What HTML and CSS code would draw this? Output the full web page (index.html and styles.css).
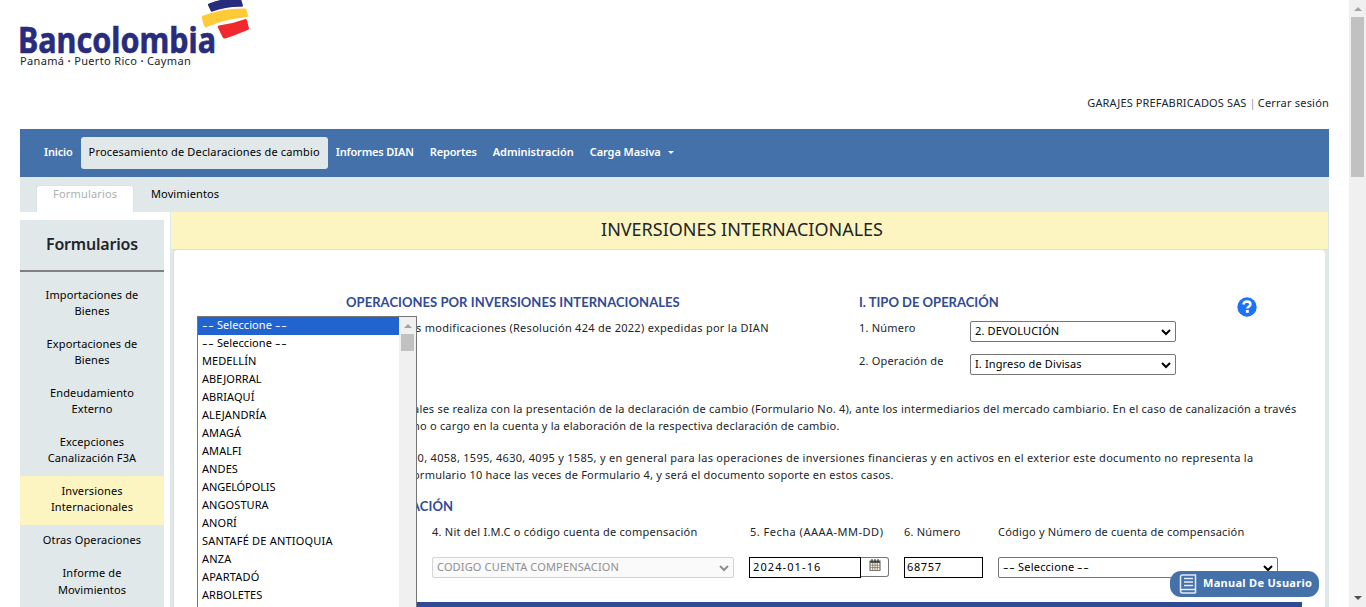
FILE: index.html
```html
<!DOCTYPE html>
<html lang="es">
<head>
<meta charset="utf-8">
<title>Inversiones Internacionales</title>
<link rel="stylesheet" href="styles.css">
</head>
<body>
<div class="window">
  <div class="page">
    <header class="header">
      <div class="brand">
        <svg class="logo" width="232" height="56" viewBox="0 0 232 56">
          <text class="logo-text" x="-2" y="53" textLength="198" lengthAdjust="spacingAndGlyphs">Bancolombia</text>
          <path d="M189 3.500Q205-3 221-1L223 5.500Q223.200 6.800 221.500 6.800Q206 6.500 192.500 11.600Q191 12 190.500 10.500L187.900 5Q187.700 4 189 3.500Z" fill="#282c7c"/>
          <path d="M183 15.800Q204 8 225 8.600Q226.200 8.700 226.600 10L228 15.500Q228.200 17 226 17.200Q205 19 186.500 27.300Q185 27.900 184.200 26L181.800 18Q181.500 16.400 183 15.800Z" fill="#ffca38"/>
          <path d="M199 25.600Q213 23.500 224.800 19.200Q226.300 18.700 226.900 20.200L229 28Q229.200 29.300 227.700 30Q216 35 205.500 38.400Q203.500 38.800 202.600 37.300L197.900 27.500Q197.300 26 199 25.600Z" fill="#f2292c"/>
        </svg>
        <div class="brand-places">Panamá <b>·</b> Puerto Rico <b>·</b> Cayman</div>
      </div>
      <div class="user"><span class="company">GARAJES PREFABRICADOS SAS</span><span class="bar">|</span><span>Cerrar sesión</span></div>
    </header>
    <nav class="nav">
      <a class="nav-link">Inicio</a>
      <a class="nav-link nav-active">Procesamiento de Declaraciones de cambio</a>
      <a class="nav-link">Informes DIAN</a>
      <a class="nav-link">Reportes</a>
      <a class="nav-link nav-wide">Administración</a>
      <a class="nav-link nav-last">Carga Masiva<i class="caret"></i></a>
    </nav>
    <div class="tabs">
      <a class="tab tab-active">Formularios</a>
      <a class="tab">Movimientos</a>
    </div>
    <div class="columns">
      <aside class="sidebar">
        <h2 class="side-title">Formularios</h2>
        <a class="side-link">Importaciones de<br>Bienes</a>
        <a class="side-link">Exportaciones de<br>Bienes</a>
        <a class="side-link">Endeudamiento<br>Externo</a>
        <a class="side-link">Excepciones<br>Canalización F3A</a>
        <a class="side-link side-active">Inversiones<br>Internacionales</a>
        <a class="side-link side-single">Otras Operaciones</a>
        <a class="side-link side-last">Informe de<br>Movimientos</a>
      </aside>
      <main class="content">
        <h1 class="title">INVERSIONES INTERNACIONALES</h1>
        <section class="panel">
          <div class="intro">
            <div class="intro-main">
              <h3 class="heading form-name">OPERACIONES POR INVERSIONES INTERNACIONALES</h3>
              <p class="line decree">s modificaciones (Resolución 424 de 2022) expedidas por la DIAN</p>
            </div>
            <div class="operation">
              <h3 class="heading heading-op">I. TIPO DE OPERACIÓN</h3>
              <div class="op-row"><label>1. Número</label><div class="select caps">2. DEVOLUCIÓN<svg class="chev" viewBox="0 0 10 8"><path d="M1 2L5 6L9 2"/></svg></div></div>
              <div class="op-row"><label>2. Operación de</label><div class="select caps">I. Ingreso de Divisas<svg class="chev" viewBox="0 0 10 8"><path d="M1 2L5 6L9 2"/></svg></div></div>
            </div>
            <svg class="help" viewBox="0 0 20 20"><circle cx="10" cy="10" r="9.700" fill="#1a73f8"/><path d="M6.400 7.500Q6.900 4.600 10 4.600Q13.500 4.700 13.500 7.300Q13.500 9 11.500 9.900Q10.400 10.400 10.400 11.600" fill="none" stroke="#fff" stroke-width="2.500"/><rect x="8.900" y="13" width="2.900" height="2.800" fill="#fff"/></svg>
          </div>
          <div class="notes">
            <p class="line note-a">ales se realiza con la presentación de la declaración de cambio (Formulario No. 4), ante los intermediarios del mercado cambiario. En el caso de canalización a través</p>
            <p class="line note-b">no o cargo en la cuenta y la elaboración de la respectiva declaración de cambio.</p>
            <p class="line note-c">90, 4058, 1595, 4630, 4095 y 1585, y en general para las operaciones de inversiones financieras y en activos en el exterior este documento no representa la</p>
            <p class="line note-d">ormulario 10 hace las veces de Formulario 4, y será el documento soporte en estos casos.</p>
          </div>
          <h3 class="heading heading-id">ACIÓN</h3>
          <div class="fields">
            <div class="field"><label class="label-nit">4. Nit del I.M.C o código cuenta de compensación</label><div class="select select-off">CODIGO CUENTA COMPENSACION<svg class="chev" viewBox="0 0 10 8"><path d="M1 2L5 6L9 2"/></svg></div></div>
            <div class="field"><label class="label-date">5. Fecha (AAAA-MM-DD)</label><div class="date"><div class="input input-date">2024-01-16</div><div class="date-btn"><svg width="12" height="12" viewBox="0 0 12 12"><path d="M.500 1.500H11.500V11.800H.500Z" fill="#555"/><path d="M1.500 4h9v7H1.500Z" fill="#fff7dc"/><path d="M3.700 4V11M6 4V11M8.300 4V11M1.500 6.200H10.500M1.500 8.600H10.500" stroke="#666" stroke-width=".7"/><path d="M3 0V3M6 0V3M9 0V3" stroke="#222"/></svg></div></div></div>
            <div class="field"><label>6. Número</label><div class="input input-num">68757</div></div>
            <div class="field"><label>Código y Número de cuenta de compensación</label><div class="select"><span class="dash">--</span> Seleccione <span class="dash">--</span><svg class="chev" viewBox="0 0 10 8"><path d="M1 2L5 6L9 2"/></svg></div></div>
          </div>
          <div class="section-bar"></div>
        </section>
      </main>
    </div>
  </div>
  <div class="scroll"><i class="arrow-up"></i><div class="thumb"></div><i class="arrow-down"></i></div>
</div>
<div class="popup">
  <div class="options">
    <div class="option option-on"><span class="dash">--</span> Seleccione <span class="dash">--</span></div>
    <div class="option"><span class="dash">--</span> Seleccione <span class="dash">--</span></div>
    <div class="option">MEDELLÍN</div>
    <div class="option">ABEJORRAL</div>
    <div class="option">ABRIAQUÍ</div>
    <div class="option">ALEJANDRÍA</div>
    <div class="option">AMAGÁ</div>
    <div class="option">AMALFI</div>
    <div class="option">ANDES</div>
    <div class="option option-tight">ANGELÓPOLIS</div>
    <div class="option">ANGOSTURA</div>
    <div class="option">ANORÍ</div>
    <div class="option option-wide">SANTAFÉ DE ANTIOQUIA</div>
    <div class="option option-wide">ANZA</div>
    <div class="option option-wide">APARTADÓ</div>
    <div class="option">ARBOLETES</div>
  </div>
  <div class="popup-scroll"><i class="popup-arrow"></i><div class="popup-thumb"></div></div>
</div>
<div class="manual"><svg width="18" height="20" viewBox="0 0 18 20" fill="none" stroke="#e3ebf5" stroke-width="1.500"><path d="M16.500 15.500V1H3.500Q1.500 1 1.500 3V17Q1.500 19 3.500 19H16.500M1.500 17Q1.500 15.500 3.500 15.500H16.500V19M5 4.500H14M5 8H14M5 11.500H14"/></svg><span class="manual-text">Manual De Usuario</span></div>
</body>
</html>
```
FILE: styles.css
```css
* { box-sizing: border-box; }
body { margin: 0; height: 607px; overflow: hidden; background: #fff; color: #212529; font: 11px/16px "Noto Sans", sans-serif; letter-spacing: .2px; }
h1, h2, h3, p { margin: 0; }
.window { display: flex; height: 607px; overflow: hidden; }
.page { width: 1349px; padding: 0 20px; }
.header { display: flex; justify-content: space-between; height: 129px; }
.brand { width: 232px; }
.logo { display: block; height: 56px; overflow: visible; }
.logo-text { font: 700 35.500px "Noto Sans", sans-serif; letter-spacing: 0; fill: #282c7c; stroke: #282c7c; stroke-width: .6; }
.brand-places { line-height: 10px; letter-spacing: .34px; }
.user { padding-top: 95px; }
.company { letter-spacing: .13px; }
.bar { margin: 0 2px 0 3px; color: #99a; }

.nav { display: flex; align-items: center; height: 48px; padding: 0 16px; background: #4471a9; }
.nav-link { height: 32px; padding: 0 8px; line-height: 30px; color: #fff; font-weight: 600; letter-spacing: -.17px; white-space: nowrap; }
.nav-wide { letter-spacing: -.03px; }
.nav-last { letter-spacing: -.08px; }
.nav-active { background: #e1e8e9; border-radius: 3px; color: #000; font-weight: 400; letter-spacing: .16px; }
.caret { display: inline-block; margin: 0 0 2px 7px; border: 3px solid transparent; border-top-color: #fff; border-bottom: 0; }
.tabs { display: flex; height: 35px; padding: 8px 16px 0; background: #e1e8e9; }
.tab { height: 27px; padding: 0 17px; line-height: 17px; color: #000; letter-spacing: .12px; }
.tab-active { width: 98px; padding: 0 16px; background: #fff; border: 1px solid #dbe1e5; border-bottom: 0; border-radius: 4px 4px 0 0; color: #adb0b0; line-height: 16px; letter-spacing: .18px; }

.columns { display: flex; justify-content: space-between; }
.sidebar { width: 144px; height: 500px; margin-top: 8px; background: #e1e8e9; text-align: center; color: #000; letter-spacing: .12px; }
.side-title { height: 52px; margin-bottom: 8px; border-bottom: 2px solid #808080; font-size: 16px; font-weight: 600; line-height: 49px; letter-spacing: -.2px; color: #212529; }
.side-link { display: block; height: 49px; padding: 7px 0; }
.side-active { background: #fcf5c2; }
.side-single { height: 32px; }
.side-last { line-height: 17px; }
.content { width: 1159px; padding: 0 1px; background: #e1e8e9; }
.title { height: 38px; background: #fcf5c2; border-bottom: 1px solid #dcdfe0; text-align: center; padding-right: 15px; font-size: 18px; font-weight: 400; line-height: 35px; letter-spacing: 0; }
.panel { height: 500px; margin: 0 3px 0 2px; padding: 41px 23px 0; background: #fff; border-left: 1px solid #d8dfe1; border-radius: 4px 4px 0 0; }

.heading { height: 22px; font: 700 13px/23px Lato, sans-serif; letter-spacing: .1px; color: #2f4b96; }
.intro { display: flex; height: 109px; }
.intro-main { width: 662px; }
.form-name { padding-left: 149px; letter-spacing: .05px; }
.heading-op { letter-spacing: 0; }
.line { white-space: nowrap; line-height: 17px; }
.decree { padding: 6px 0 0 219px; letter-spacing: .28px; }
.operation { width: 317px; }
.op-row { display: flex; height: 33px; padding-top: 8px; }
.op-row label { width: 111px; margin-top: -1px; }
.select { position: relative; flex: 1; height: 21px; padding: 0 4px; border: 1px solid #767676; border-radius: 2px; background: #fff; color: #000; line-height: 18px; }
.caps { letter-spacing: .13px; }
.chev { position: absolute; right: 4px; top: 6px; width: 10px; height: 8px; fill: none; stroke: #000; stroke-width: 2; }
.help { width: 20px; height: 20px; margin: 6px 0 0 61px; }
.notes { padding-left: 216px; }
.note-a { letter-spacing: .22px; }
.note-b { margin-bottom: 15px; letter-spacing: .21px; }
.note-c { margin-left: -2px; letter-spacing: .292px; }
.note-d { letter-spacing: .22px; }
.heading-id { margin: 12px 0 7px 214px; }
.fields { display: grid; grid-template-columns: 302px 140px 79px 280px; gap: 15px; padding-left: 235px; white-space: nowrap; }
.field label { display: block; height: 33px; line-height: 16px; }
.label-nit { letter-spacing: .24px; }
.field .label-date { padding-left: 1px; letter-spacing: .5px; }
.select-off { border-color: #d4d4d4; background: #fafafa; color: #8f8f8f; letter-spacing: .15px; }
.select-off .chev { stroke: #8f8f8f; }
.date { display: flex; }
.input { height: 21px; padding-left: 2px; border: 1px solid #000; color: #000; line-height: 17px; }
.input-date { width: 112px; padding-left: 3px; letter-spacing: 1.100px; }
.input-num { letter-spacing: .64px; }
.date-btn { display: flex; justify-content: center; width: 28px; height: 20px; padding-top: 1px; border: 1px solid #767676; border-left: 0; border-radius: 0 3px 3px 0; }
.section-bar { height: 20px; margin: 24px 0 0; background: #2f4b96; }
.dash { display: inline-block; width: 12px; letter-spacing: .5px; transform: scaleX(1.550); transform-origin: 0 0; }

.scroll { display: flex; flex-direction: column; align-items: center; width: 17px; background: #f0f0f0; }
.arrow-up { margin: 7px 0 6px; border: 4px solid transparent; border-bottom-color: #a3a3a3; border-top: 0; }
.thumb { width: 13px; height: 160px; background: #c1c1c1; }
.arrow-down { margin-top: auto; margin-bottom: 7px; border: 4px solid transparent; border-top-color: #505050; border-bottom: 0; }

.popup { position: absolute; left: 197px; top: 316px; display: flex; width: 220px; height: 300px; border: 1px solid #767676; background: #fff; color: #000; }
.options { width: 201px; }
.option { height: 18px; padding-left: 4px; line-height: 16px; letter-spacing: .07px; }
.option-tight { letter-spacing: -.09px; }
.option-wide { letter-spacing: .2px; }
.option-on { background: #2163cf; color: #fff; }
.popup-scroll { display: flex; flex-direction: column; align-items: center; width: 17px; background: #f0f0f0; }
.popup-arrow { margin: 7px 0 6px; border: 4px solid transparent; border-bottom-color: #a3a3a3; border-top: 0; }
.popup-thumb { width: 13px; height: 17px; background: #c1c1c1; }
.manual { position: absolute; left: 1170px; top: 571px; display: flex; align-items: center; gap: 6px; width: 149px; height: 26px; padding-left: 9px; border-radius: 11px; background: #4471a9; color: #fff; font-weight: 700; letter-spacing: .3px; white-space: nowrap; }
.manual-text { padding-bottom: 2px; }
```
